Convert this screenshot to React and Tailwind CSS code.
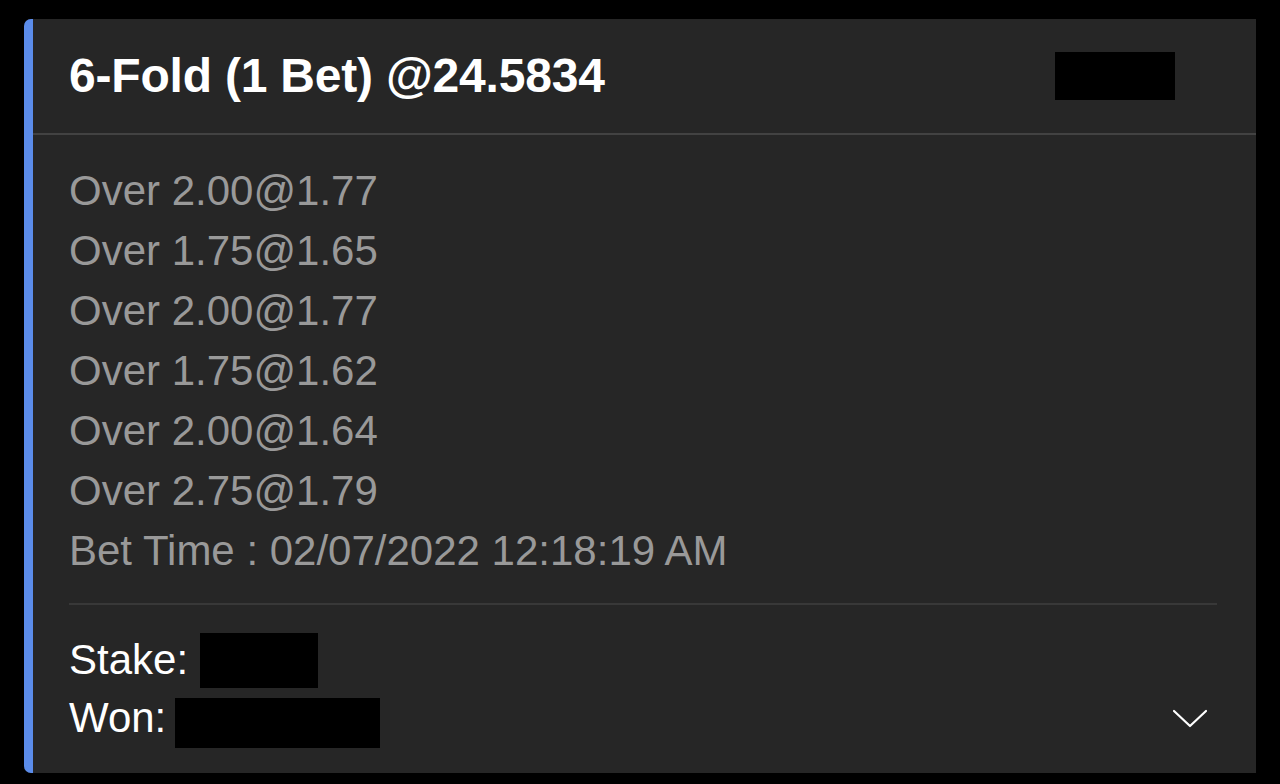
import React from 'react';

const legs = [
  'Over 2.00@1.77',
  'Over 1.75@1.65',
  'Over 2.00@1.77',
  'Over 1.75@1.62',
  'Over 2.00@1.64',
  'Over 2.75@1.79',
];

const BetCard = () => {
  return (
    <div className="flex w-[1232px] h-[754px] bg-[#262626] rounded-l-[7px] overflow-hidden">
      <div className="w-[9px] bg-[#5b8cea] shrink-0"></div>
      <div className="flex-1 flex flex-col">
        <div className="h-[116px] flex items-center justify-between pl-[36px] pr-[81px] border-b-2 border-[#424242]">
          <h1 className="text-[48px] font-bold text-white leading-none tracking-[-0.2px]">6-Fold (1 Bet) @24.5834</h1>
          <div className="w-[120px] h-[48px] bg-black"></div>
        </div>

        <div className="px-[36px] pt-[25px]">
          {legs.map((leg, i) => (
            <div key={i} className="h-[60px] flex items-center text-[42px] text-[#999999]">
              {leg}
            </div>
          ))}
          <div className="h-[60px] flex items-center text-[42px] text-[#999999]">
            Bet Time : 02/07/2022 12:18:19 AM
          </div>
          <div className="mt-[23px] mr-[3px] border-t-2 border-[#383838]"></div>
        </div>

        <div className="flex items-end justify-between pl-[36px] pr-[48px] pt-[25px]">
          <div className="flex flex-col">
            <div className="h-[58px] flex items-center text-[42px] text-white">
              <span>Stake:</span>
              <div className="ml-[12px] w-[118px] h-[55px] bg-black mt-[2px]"></div>
            </div>
            <div className="h-[58px] flex items-center text-[42px] text-white">
              <span>Won:</span>
              <div className="ml-[9px] w-[205px] h-[50px] bg-black mt-[12px]"></div>
            </div>
          </div>
          <svg width="36" height="20" viewBox="0 0 36 20" className="mb-[17px]" fill="none" stroke="#ffffff" strokeWidth="2.2" strokeLinecap="round" strokeLinejoin="round">
            <path d="M2 2 L18 17 L34 2" />
          </svg>
        </div>
      </div>
    </div>
  );
};

export default function App() {
  return (
    <div className="w-[1280px] h-[784px] bg-black pt-[19px] pl-[24px] font-['Liberation_Sans',Arial,sans-serif]">
      <BetCard />
    </div>
  );
}
